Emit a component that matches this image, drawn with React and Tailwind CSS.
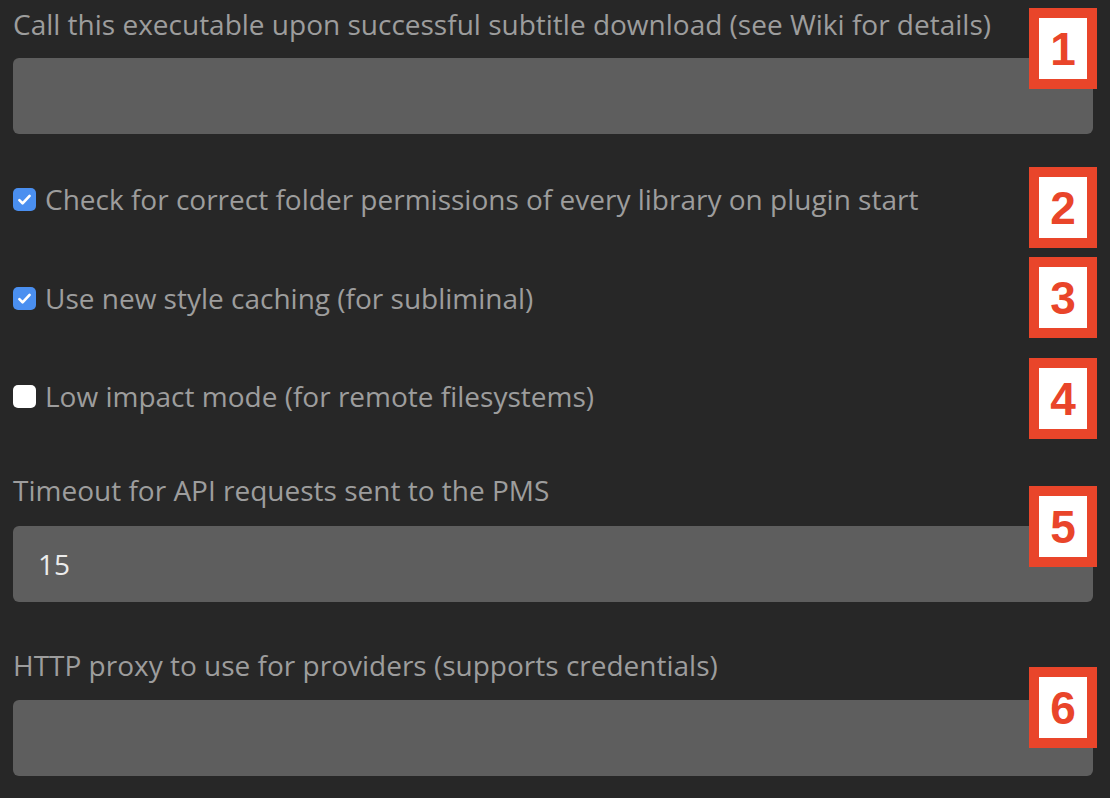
const font = { fontFamily: '"Open Sans", "Noto Sans", sans-serif' };

function Check({ checked }) {
  if (!checked) {
    return <div className="w-[23px] h-[23px] rounded-[5px] bg-white shrink-0" />;
  }
  return (
    <div className="w-[23px] h-[23px] rounded-[5px] bg-[#4a8ff0] shrink-0 flex items-center justify-center">
      <svg width="17" height="17" viewBox="0 0 16 16" fill="none">
        <path d="M3.2 8.6l3 3L12.8 4.6" stroke="white" strokeWidth="2.5" strokeLinecap="round" strokeLinejoin="round" />
      </svg>
    </div>
  );
}

function Badge({ n, top }) {
  return (
    <div
      className="absolute left-[1029px] w-[68px] h-[81px] border-[10px] border-[#e9452a] bg-white flex items-center justify-center"
      style={{ top }}
    >
      <span className="text-[#e9452a] font-bold text-[46px] leading-none" style={{ fontFamily: '"Liberation Sans", Arial, sans-serif' }}>
        {n}
      </span>
    </div>
  );
}

function Label({ children, className = '' }) {
  return (
    <div className={`h-[48px] flex items-center text-[28px] text-[#9d9d9d] whitespace-nowrap ${className}`}>
      {children}
    </div>
  );
}

function Field({ value, className = '' }) {
  return (
    <div className={`h-[76px] rounded-[6px] bg-[#5e5e5e] flex items-center pl-[25px] text-[28px] text-[#ececec] ${className}`}>
      {value}
    </div>
  );
}

function CheckRow({ checked, label, className = '' }) {
  return (
    <div className={`h-[46px] flex items-center gap-[9px] ${className}`}>
      <Check checked={checked} />
      <span className="text-[28px] text-[#9d9d9d] whitespace-nowrap">{label}</span>
    </div>
  );
}

export default function App() {
  return (
    <div className="relative w-[1110px] h-[798px] bg-[#272727] pl-[13px] overflow-hidden" style={font}>
      <div className="w-[1080px] flex flex-col">
        <Label>Call this executable upon successful subtitle download (see Wiki for details)</Label>
        <Field className="mt-[10px]" />

        <CheckRow checked label="Check for correct folder permissions of every library on plugin start" className="mt-[42px]" />
        <CheckRow checked label="Use new style caching (for subliminal)" className="mt-[53px]" />
        <CheckRow checked={false} label="Low impact mode (for remote filesystems)" className="mt-[52px]" />

        <Label className="mt-[47px]">Timeout for API requests sent to the PMS</Label>
        <Field value="15" className="mt-[12px]" />

        <Label className="mt-[39px]">HTTP proxy to use for providers (supports credentials)</Label>
        <Field className="mt-[11px]" />
      </div>

      <Badge n="1" top={8} />
      <Badge n="2" top={167} />
      <Badge n="3" top={257} />
      <Badge n="4" top={358} />
      <Badge n="5" top={486} />
      <Badge n="6" top={667} />
    </div>
  );
}
